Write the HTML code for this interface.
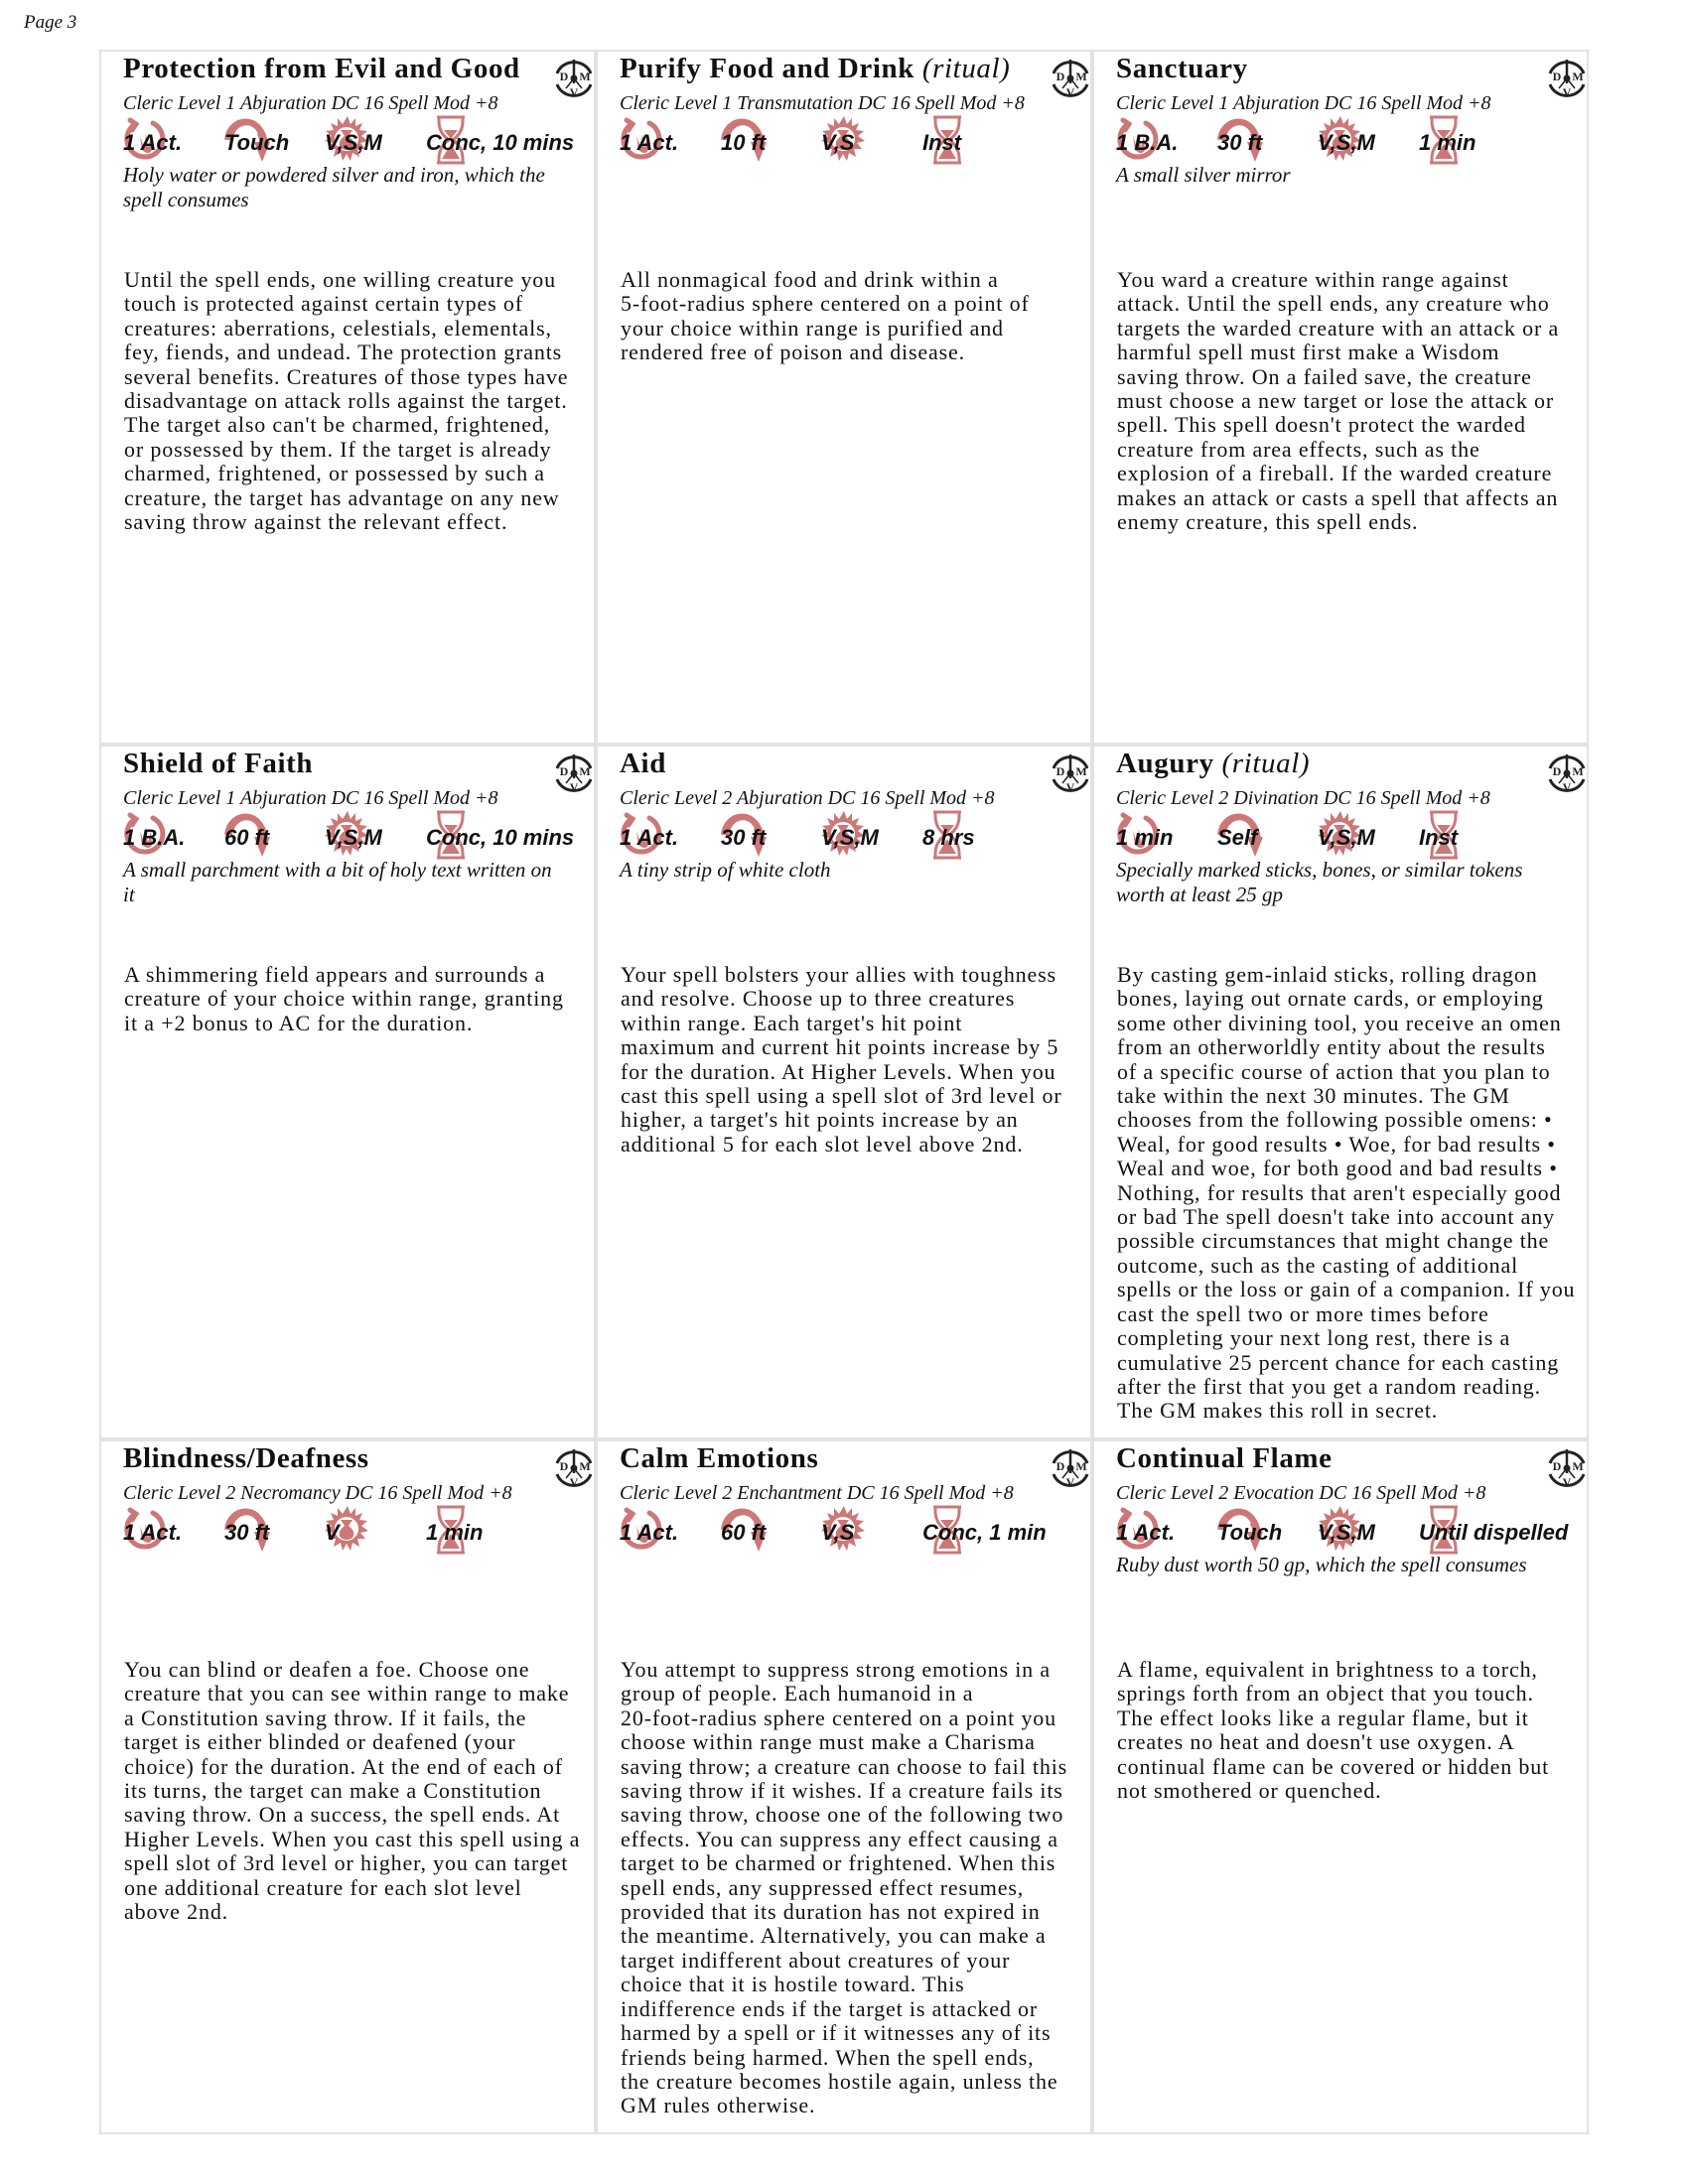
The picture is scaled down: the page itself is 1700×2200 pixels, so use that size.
<!DOCTYPE html>
<html><head><meta charset="utf-8">
<style>
*{margin:0;padding:0;box-sizing:border-box}
body{width:1700px;height:2200px;background:#fff;position:relative;overflow:hidden;font-family:"Liberation Serif",serif;color:#111}
.pg{position:absolute;left:24px;top:12px;font-style:italic;font-size:19px}
.card{position:absolute;width:500px;height:700px;border:2px solid #e2e2e2}
.card>*{position:absolute}
.t{left:22px;top:2px;font-size:29px;font-weight:bold;line-height:30px;white-space:nowrap;letter-spacing:0.6px}
.t i{font-weight:normal}
.s{left:22px;top:40px;font-size:20px;font-style:italic;line-height:24px;white-space:nowrap}
.ic{top:63px;width:46px;height:52px}
.v{top:79px;font-family:"Liberation Sans",sans-serif;font-weight:bold;font-style:italic;font-size:22px;line-height:26px;white-space:nowrap}
.m{left:22px;top:112px;font-size:21px;font-style:italic;line-height:25px;white-space:nowrap}
.b{left:23px;top:218px;font-size:22px;line-height:24.4px;white-space:nowrap;letter-spacing:0.85px}
.lg{right:-2px;top:5px;width:44px;height:46px}
.c1{left:22px}.c2{left:124px}.c3{left:225px}.c4{left:327px}
</style></head><body>
<svg width="0" height="0" style="position:absolute">
<defs>
<symbol id="act" viewBox="0 0 46 52"><g fill="none" stroke="#cc7878" stroke-width="5" stroke-linecap="round"><path d="M12 10 A18 18 0 1 0 30 9"/><path d="M7 6 L13 10 L9 16"/></g><path d="M17 22 l4 12 l2-14 l2 14 l3-12 l1 14 q-3 6 -10 0z" fill="#cc7878"/></symbol>
<symbol id="rng" viewBox="0 0 46 52"><path d="M4 26 C6 4 36 0 40 30" fill="none" stroke="#cc7878" stroke-width="8"/><path d="M30 28 L38 48 L46 28 Z" fill="#cc7878"/><path d="M12 18 C18 10 28 10 33 20" fill="none" stroke="#fff" stroke-width="2"/></symbol>
<symbol id="cmp" viewBox="0 0 46 52"><g fill="#cc7878"><polygon points="23,2 26,10 31,4 31,12 38,9 35,16 43,17 37,22 44,27 36,29 41,35 33,35 35,43 28,39 26,47 22,40 18,47 16,39 9,43 11,35 3,35 8,29 0,27 7,22 1,17 9,16 6,9 13,12 13,4 18,10"/></g><circle cx="22" cy="25" r="12" fill="#fff"/><path d="M16 16 h12 l-4 6 q8 6 4 12 q-6 4 -12 0 q-4 -6 4 -12z" fill="#cc7878"/></symbol>
<symbol id="hg" viewBox="0 0 46 52"><g fill="none" stroke="#cc7878" stroke-width="3"><path d="M8 3 h28 M8 49 h28 M10 3 v4 q0 12 10 19 q-10 7 -10 19 v4 M34 3 v4 q0 12 -10 19 q10 7 10 19 v4"/></g><path d="M15 16 h14 l-7 9z M22 30 l9 15 h-18z" fill="#cc7878"/></symbol>
<symbol id="logo" viewBox="0 0 44 46"><g fill="none" stroke="#222" stroke-width="3"><path d="M5 17 A18 17 0 0 1 39 17"/><path d="M5 28 A18 17 0 0 0 39 28"/></g><path d="M22 3 V27" stroke="#222" stroke-width="2.5"/><circle cx="22" cy="22" r="3.5" fill="#222"/><path d="M14 32 L22 22 L30 32" stroke="#222" stroke-width="1.5" fill="none"/><g font-family="Liberation Serif" font-weight="bold" font-size="12" fill="#222" text-anchor="middle"><text x="12" y="24">D</text><text x="33" y="24">M</text><text x="22" y="40">V</text></g></symbol>
</defs></svg>

<div class="pg">Page 3</div>

<div class="card" style="left:100px;top:50px">
<div class="t">Protection from Evil and Good</div>
<svg class="lg"><use href="#logo"/></svg>
<div class="s">Cleric Level 1 Abjuration DC 16 Spell Mod +8</div>
<svg class="ic c1"><use href="#act"/></svg><svg class="ic c2"><use href="#rng"/></svg><svg class="ic c3"><use href="#cmp"/></svg><svg class="ic c4" style="margin-left:3px"><use href="#hg"/></svg>
<div class="v c1">1 Act.</div><div class="v c2">Touch</div><div class="v c3">V,S,M</div><div class="v c4">Conc, 10 mins</div>
<div class="m">Holy water or powdered silver and iron, which the<br>spell consumes</div>
<div class="b">Until the spell ends, one willing creature you<br>touch is protected against certain types of<br>creatures: aberrations, celestials, elementals,<br>fey, fiends, and undead. The protection grants<br>several benefits. Creatures of those types have<br>disadvantage on attack rolls against the target.<br>The target also can't be charmed, frightened,<br>or possessed by them. If the target is already<br>charmed, frightened, or possessed by such a<br>creature, the target has advantage on any new<br>saving throw against the relevant effect.</div>
</div>

<div class="card" style="left:600px;top:50px">
<div class="t">Purify Food and Drink <i>(ritual)</i></div>
<svg class="lg"><use href="#logo"/></svg>
<div class="s">Cleric Level 1 Transmutation DC 16 Spell Mod +8</div>
<svg class="ic c1"><use href="#act"/></svg><svg class="ic c2"><use href="#rng"/></svg><svg class="ic c3"><use href="#cmp"/></svg><svg class="ic c4" style="margin-left:3px"><use href="#hg"/></svg>
<div class="v c1">1 Act.</div><div class="v c2">10 ft</div><div class="v c3">V,S</div><div class="v c4">Inst</div>
<div class="b">All nonmagical food and drink within a<br>5-foot-radius sphere centered on a point of<br>your choice within range is purified and<br>rendered free of poison and disease.</div>
</div>

<div class="card" style="left:1100px;top:50px">
<div class="t">Sanctuary</div>
<svg class="lg"><use href="#logo"/></svg>
<div class="s">Cleric Level 1 Abjuration DC 16 Spell Mod +8</div>
<svg class="ic c1"><use href="#act"/></svg><svg class="ic c2"><use href="#rng"/></svg><svg class="ic c3"><use href="#cmp"/></svg><svg class="ic c4" style="margin-left:3px"><use href="#hg"/></svg>
<div class="v c1">1 B.A.</div><div class="v c2">30 ft</div><div class="v c3">V,S,M</div><div class="v c4">1 min</div>
<div class="m">A small silver mirror</div>
<div class="b">You ward a creature within range against<br>attack. Until the spell ends, any creature who<br>targets the warded creature with an attack or a<br>harmful spell must first make a Wisdom<br>saving throw. On a failed save, the creature<br>must choose a new target or lose the attack or<br>spell. This spell doesn't protect the warded<br>creature from area effects, such as the<br>explosion of a fireball. If the warded creature<br>makes an attack or casts a spell that affects an<br>enemy creature, this spell ends.</div>
</div>

<div class="card" style="left:100px;top:750px">
<div class="t">Shield of Faith</div>
<svg class="lg"><use href="#logo"/></svg>
<div class="s">Cleric Level 1 Abjuration DC 16 Spell Mod +8</div>
<svg class="ic c1"><use href="#act"/></svg><svg class="ic c2"><use href="#rng"/></svg><svg class="ic c3"><use href="#cmp"/></svg><svg class="ic c4" style="margin-left:3px"><use href="#hg"/></svg>
<div class="v c1">1 B.A.</div><div class="v c2">60 ft</div><div class="v c3">V,S,M</div><div class="v c4">Conc, 10 mins</div>
<div class="m">A small parchment with a bit of holy text written on<br>it</div>
<div class="b">A shimmering field appears and surrounds a<br>creature of your choice within range, granting<br>it a +2 bonus to AC for the duration.</div>
</div>

<div class="card" style="left:600px;top:750px">
<div class="t">Aid</div>
<svg class="lg"><use href="#logo"/></svg>
<div class="s">Cleric Level 2 Abjuration DC 16 Spell Mod +8</div>
<svg class="ic c1"><use href="#act"/></svg><svg class="ic c2"><use href="#rng"/></svg><svg class="ic c3"><use href="#cmp"/></svg><svg class="ic c4" style="margin-left:3px"><use href="#hg"/></svg>
<div class="v c1">1 Act.</div><div class="v c2">30 ft</div><div class="v c3">V,S,M</div><div class="v c4">8 hrs</div>
<div class="m">A tiny strip of white cloth</div>
<div class="b">Your spell bolsters your allies with toughness<br>and resolve. Choose up to three creatures<br>within range. Each target's hit point<br>maximum and current hit points increase by 5<br>for the duration. At Higher Levels. When you<br>cast this spell using a spell slot of 3rd level or<br>higher, a target's hit points increase by an<br>additional 5 for each slot level above 2nd.</div>
</div>

<div class="card" style="left:1100px;top:750px">
<div class="t">Augury <i>(ritual)</i></div>
<svg class="lg"><use href="#logo"/></svg>
<div class="s">Cleric Level 2 Divination DC 16 Spell Mod +8</div>
<svg class="ic c1"><use href="#act"/></svg><svg class="ic c2"><use href="#rng"/></svg><svg class="ic c3"><use href="#cmp"/></svg><svg class="ic c4" style="margin-left:3px"><use href="#hg"/></svg>
<div class="v c1">1 min</div><div class="v c2">Self</div><div class="v c3">V,S,M</div><div class="v c4">Inst</div>
<div class="m">Specially marked sticks, bones, or similar tokens<br>worth at least 25 gp</div>
<div class="b">By casting gem-inlaid sticks, rolling dragon<br>bones, laying out ornate cards, or employing<br>some other divining tool, you receive an omen<br>from an otherworldly entity about the results<br>of a specific course of action that you plan to<br>take within the next 30 minutes. The GM<br>chooses from the following possible omens: •<br>Weal, for good results • Woe, for bad results •<br>Weal and woe, for both good and bad results •<br>Nothing, for results that aren't especially good<br>or bad The spell doesn't take into account any<br>possible circumstances that might change the<br>outcome, such as the casting of additional<br>spells or the loss or gain of a companion. If you<br>cast the spell two or more times before<br>completing your next long rest, there is a<br>cumulative 25 percent chance for each casting<br>after the first that you get a random reading.<br>The GM makes this roll in secret.</div>
</div>

<div class="card" style="left:100px;top:1450px">
<div class="t">Blindness/Deafness</div>
<svg class="lg"><use href="#logo"/></svg>
<div class="s">Cleric Level 2 Necromancy DC 16 Spell Mod +8</div>
<svg class="ic c1"><use href="#act"/></svg><svg class="ic c2"><use href="#rng"/></svg><svg class="ic c3"><use href="#cmp"/></svg><svg class="ic c4" style="margin-left:3px"><use href="#hg"/></svg>
<div class="v c1">1 Act.</div><div class="v c2">30 ft</div><div class="v c3">V</div><div class="v c4">1 min</div>
<div class="b">You can blind or deafen a foe. Choose one<br>creature that you can see within range to make<br>a Constitution saving throw. If it fails, the<br>target is either blinded or deafened (your<br>choice) for the duration. At the end of each of<br>its turns, the target can make a Constitution<br>saving throw. On a success, the spell ends. At<br>Higher Levels. When you cast this spell using a<br>spell slot of 3rd level or higher, you can target<br>one additional creature for each slot level<br>above 2nd.</div>
</div>

<div class="card" style="left:600px;top:1450px">
<div class="t">Calm Emotions</div>
<svg class="lg"><use href="#logo"/></svg>
<div class="s">Cleric Level 2 Enchantment DC 16 Spell Mod +8</div>
<svg class="ic c1"><use href="#act"/></svg><svg class="ic c2"><use href="#rng"/></svg><svg class="ic c3"><use href="#cmp"/></svg><svg class="ic c4" style="margin-left:3px"><use href="#hg"/></svg>
<div class="v c1">1 Act.</div><div class="v c2">60 ft</div><div class="v c3">V,S</div><div class="v c4">Conc, 1 min</div>
<div class="b">You attempt to suppress strong emotions in a<br>group of people. Each humanoid in a<br>20-foot-radius sphere centered on a point you<br>choose within range must make a Charisma<br>saving throw; a creature can choose to fail this<br>saving throw if it wishes. If a creature fails its<br>saving throw, choose one of the following two<br>effects. You can suppress any effect causing a<br>target to be charmed or frightened. When this<br>spell ends, any suppressed effect resumes,<br>provided that its duration has not expired in<br>the meantime. Alternatively, you can make a<br>target indifferent about creatures of your<br>choice that it is hostile toward. This<br>indifference ends if the target is attacked or<br>harmed by a spell or if it witnesses any of its<br>friends being harmed. When the spell ends,<br>the creature becomes hostile again, unless the<br>GM rules otherwise.</div>
</div>

<div class="card" style="left:1100px;top:1450px">
<div class="t">Continual Flame</div>
<svg class="lg"><use href="#logo"/></svg>
<div class="s">Cleric Level 2 Evocation DC 16 Spell Mod +8</div>
<svg class="ic c1"><use href="#act"/></svg><svg class="ic c2"><use href="#rng"/></svg><svg class="ic c3"><use href="#cmp"/></svg><svg class="ic c4" style="margin-left:3px"><use href="#hg"/></svg>
<div class="v c1">1 Act.</div><div class="v c2">Touch</div><div class="v c3">V,S,M</div><div class="v c4">Until dispelled</div>
<div class="m">Ruby dust worth 50 gp, which the spell consumes</div>
<div class="b">A flame, equivalent in brightness to a torch,<br>springs forth from an object that you touch.<br>The effect looks like a regular flame, but it<br>creates no heat and doesn't use oxygen. A<br>continual flame can be covered or hidden but<br>not smothered or quenched.</div>
</div>

</body></html>
